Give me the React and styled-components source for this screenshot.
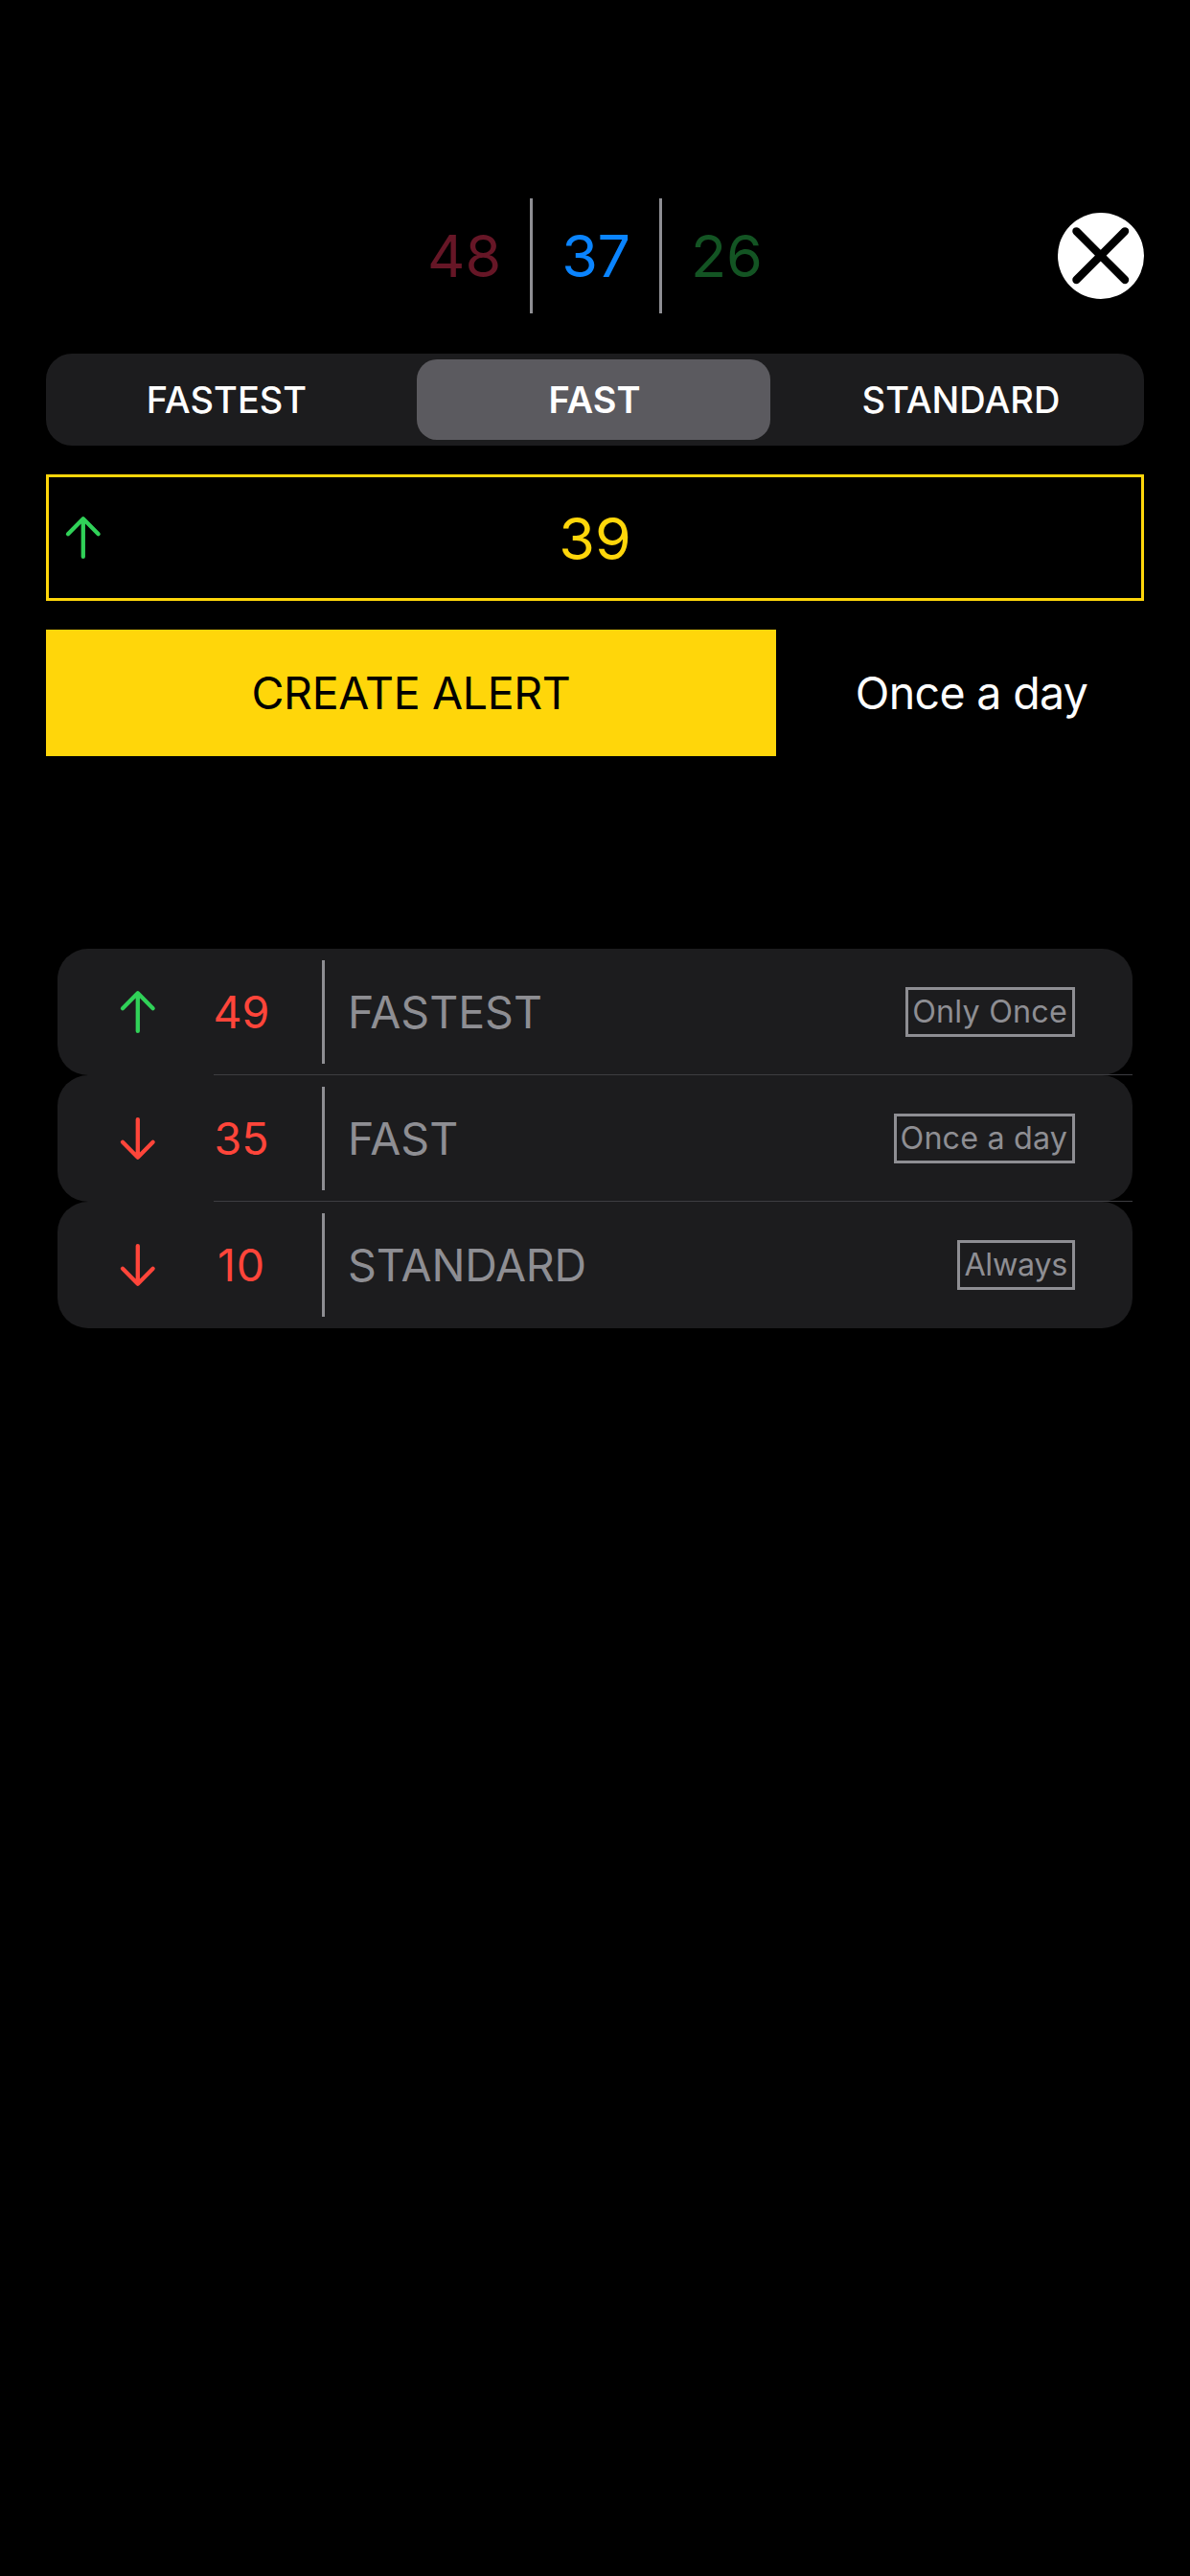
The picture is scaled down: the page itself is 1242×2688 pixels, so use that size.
import React from "react";
import styled, { createGlobalStyle } from "styled-components";

const color = {
  yellow: "#ffd60a",
  green: "#30d158",
  red: "#ff453a",
  blue: "#0a84ff",
  dimPink: "#661626",
  dimGreen: "#135423",
  gray: "#8e8e93",
  surface: "#1c1c1e",
  selected: "#5b5a5f",
  hairline: "#3d3d41",
};

const GlobalStyle = createGlobalStyle`
  *, *::before, *::after { box-sizing: border-box; }
  body {
    margin: 0;
    background: #000;
    color: #fff;
    font-family: Inter, "Liberation Sans", sans-serif;
  }
  button { font: inherit; color: inherit; border: 0; padding: 0; background: none; }
`;

const Screen = styled.main`
  display: flex;
  flex-direction: column;
  width: 1242px;
  height: 2688px;
  padding: 207px 48px 0;
  background: #000;
`;

const Header = styled.header`
  display: grid;
  grid-template-columns: 90px 1fr 90px;
  align-items: center;
  height: 120px;
`;

const Prices = styled.div`
  grid-column: 2;
  display: flex;
  justify-content: center;
  align-items: center;
  gap: 30px;
  height: 120px;
`;

const Price = styled.span`
  font-size: 61px;
  line-height: 74px;
  color: ${(p) => p.$tone};
  letter-spacing: ${(p) => p.$tracking || 0}px;
  margin-right: ${(p) => -(p.$tracking || 0)}px;
`;

const Rule = styled.span`
  flex: none;
  width: 3px;
  height: ${(p) => p.$height}px;
  background: ${color.gray};
`;

const CloseButton = styled.button`
  display: flex;
  width: 90px;
  height: 90px;
`;

const Segments = styled.div`
  display: grid;
  grid-template-columns: 381px 381px 1fr;
  height: 96px;
  margin-top: 42px;
  padding: 6px;
  border-radius: 27px;
  background: ${color.surface};
`;

const Segment = styled.button`
  display: flex;
  align-items: center;
  justify-content: center;
  margin-right: ${(p) => (p.$selected ? 12 : 0)}px;
  padding-right: ${(p) => p.$insetRight || 0}px;
  padding-left: ${(p) => p.$insetLeft || 0}px;
  border-radius: 21px;
  background: ${(p) => (p.$selected ? color.selected : "transparent")};
  font-size: 38px;
  font-weight: ${(p) => (p.$selected ? 560 : 490)};
  letter-spacing: ${(p) => p.$tracking || 0}px;
`;

const PriceField = styled.div`
  display: grid;
  grid-template-columns: 72px 1fr 72px;
  align-items: center;
  height: 132px;
  margin-top: 30px;
  border: 3px solid ${color.yellow};
`;

const FieldValue = styled.span`
  padding-top: 2px;
  text-align: center;
  font-size: 61px;
  line-height: 74px;
  color: ${color.yellow};
`;

const Actions = styled.div`
  display: grid;
  grid-template-columns: 762px 1fr;
  column-gap: 24px;
  height: 132px;
  margin-top: 30px;
`;

const Action = styled.button`
  display: flex;
  align-items: center;
  justify-content: center;
  font-size: 46.5px;
  letter-spacing: ${(p) => p.$tracking}px;
  color: ${(p) => (p.$primary ? "#000" : "#fff")};
  background: ${(p) => (p.$primary ? color.yellow : "transparent")};
`;

const AlertList = styled.ul`
  list-style: none;
  margin: 201px 12px 0;
  padding: 0;
`;

const AlertRow = styled.li`
  position: relative;
  display: flex;
  align-items: center;
  height: 132px;
  padding: 0 60px 0 64px;
  border-radius: 32px;
  background: ${color.surface};

  &:not(:last-child)::after {
    content: "";
    position: absolute;
    left: 163px;
    right: 0;
    bottom: 0;
    height: 1px;
    background: ${color.hairline};
  }
`;

const AlertPrice = styled.span`
  width: 100px;
  margin: 0 34px 0 38px;
  text-align: center;
  font-size: 46.5px;
  letter-spacing: ${(p) => p.$tracking || 0}px;
  color: ${color.red};
`;

const AlertSpeed = styled.span`
  flex: 1;
  padding-left: 24px;
  font-size: 46.5px;
  letter-spacing: ${(p) => p.$tracking || 0}px;
  color: ${color.gray};
`;

const Badge = styled.span`
  height: 52px;
  padding: 0 5px 0 4px;
  border: 3px solid ${color.gray};
  font-size: 32.3px;
  line-height: 45px;
  letter-spacing: ${(p) => p.$tracking}px;
  color: ${color.gray};
`;

const ArrowSvg = styled.svg`
  flex: none;
  justify-self: center;
  display: block;
  transform: ${(p) => (p.$down ? "scaleY(-1)" : "none")};
`;

function Arrow({ down = false }) {
  return (
    <ArrowSvg
      $down={down}
      width="40"
      height="48"
      viewBox="0 0 40 48"
      fill="none"
      stroke={down ? color.red : color.green}
      strokeWidth="4.3"
      strokeLinecap="round"
      strokeLinejoin="round"
    >
      <path d="M19.8 43.9V4.3M4 20.2L19.8 4.3L35.6 20.2" />
    </ArrowSvg>
  );
}

function CloseIcon() {
  return (
    <svg width="90" height="90" viewBox="0 0 90 90">
      <circle cx="45" cy="45" r="45" fill="#fff" />
      <path
        d="M19.4 19.3L70.1 70M70.1 19.3L19.4 70"
        stroke="#000"
        strokeWidth="8.3"
        strokeLinecap="round"
      />
    </svg>
  );
}

const alerts = [
  { price: 49, speed: "FASTEST", repeat: "Only Once", repeatTracking: 0.2 },
  { price: 35, speed: "FAST", repeat: "Once a day", repeatTracking: 0.15, down: true },
  {
    price: 10,
    speed: "STANDARD",
    repeat: "Always",
    repeatTracking: -0.3,
    down: true,
    priceTracking: 1,
    speedTracking: -0.2,
  },
];

export default function App() {
  return (
    <>
      <GlobalStyle />
      <Screen>
        <Header>
          <Prices>
            <Price $tone={color.dimPink}>48</Price>
            <Rule $height={120} />
            <Price $tone={color.blue} $tracking={-0.5}>37</Price>
            <Rule $height={120} />
            <Price $tone={color.dimGreen}>26</Price>
          </Prices>
          <CloseButton aria-label="Close">
            <CloseIcon />
          </CloseButton>
        </Header>
        <Segments>
          <Segment $insetRight={16}>FASTEST</Segment>
          <Segment $selected $insetLeft={2}>FAST</Segment>
          <Segment $insetLeft={2}>STANDARD</Segment>
        </Segments>
        <PriceField>
          <Arrow />
          <FieldValue>39</FieldValue>
        </PriceField>
        <Actions>
          <Action $primary $tracking={-0.36}>CREATE ALERT</Action>
          <Action $tracking={-0.65}>Once a day</Action>
        </Actions>
        <AlertList>
          {alerts.map((a) => (
            <AlertRow key={a.speed}>
              <Arrow down={a.down} />
              <AlertPrice $tracking={a.priceTracking}>{a.price}</AlertPrice>
              <Rule $height={108} />
              <AlertSpeed $tracking={a.speedTracking}>{a.speed}</AlertSpeed>
              <Badge $tracking={a.repeatTracking}>{a.repeat}</Badge>
            </AlertRow>
          ))}
        </AlertList>
      </Screen>
    </>
  );
}
